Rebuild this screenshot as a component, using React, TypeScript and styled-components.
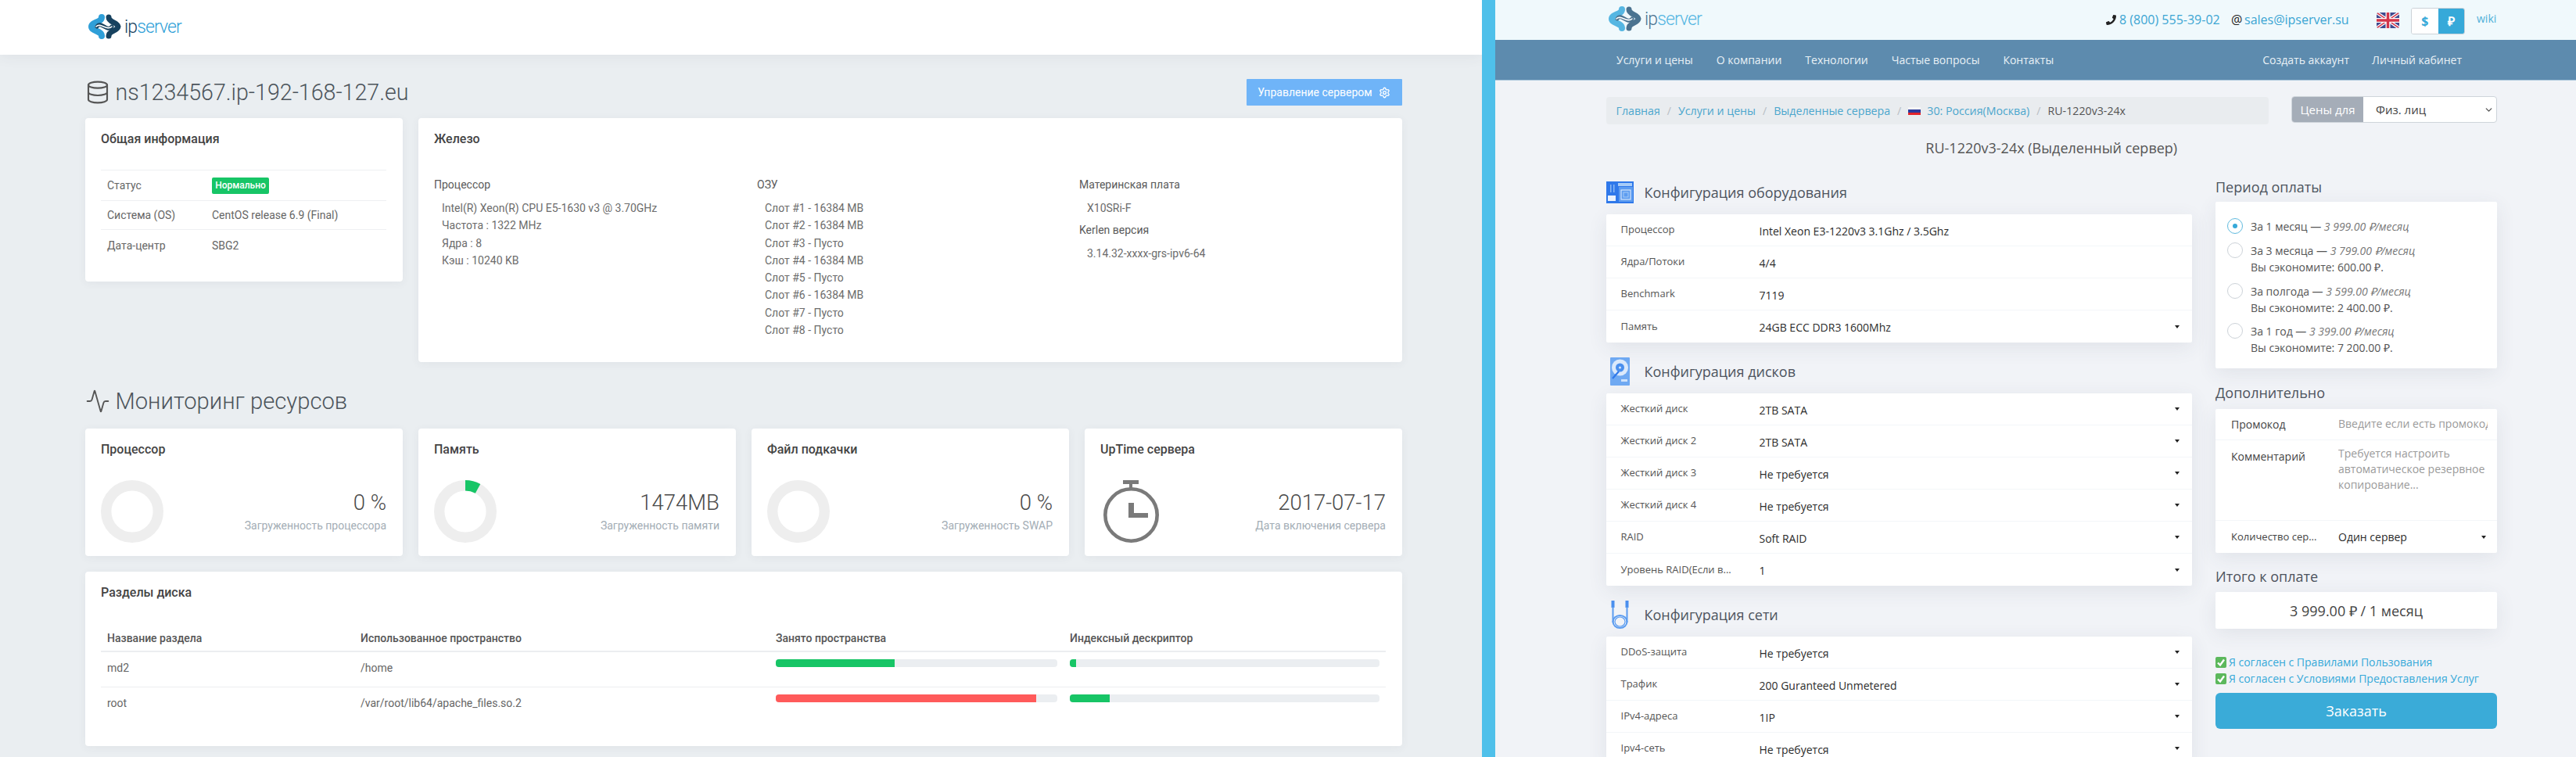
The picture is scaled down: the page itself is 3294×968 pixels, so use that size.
import React from 'react';
import styled, { createGlobalStyle } from 'styled-components';
import { Database, Activity, Settings, ChevronDown } from 'lucide-react';
import { FaPhoneAlt } from 'react-icons/fa';

const Global = createGlobalStyle`
  html, body { margin: 0; padding: 0; height: 968px; overflow: hidden; background: #fff; }
  * { box-sizing: border-box; }
`;

const Page = styled.div`
  display: grid;
  grid-template-columns: 1895px 17px 1382px;
  width: 3294px;
  height: 968px;
  overflow: hidden;
`;

const Divider = styled.div`
  background: #4fc0ea;
`;

/* ---------- left panel ---------- */

const Dash = styled.div`
  background: #eaeef1;
  font-family: Roboto, sans-serif;
  color: #666;
  font-size: 14px;
  height: 968px;
  overflow: hidden;
`;

const DashTop = styled.header`
  height: 70px;
  background: #fff;
  padding: 17px 0 0 112px;
  box-shadow: 0 1px 18px rgba(60, 70, 80, 0.08);
`;

const DashMain = styled.main`
  padding: 31px 102.5px 0 108.5px;
`;

const TitleRow = styled.div`
  display: flex;
  align-items: center;
  justify-content: space-between;
  height: 34px;
  margin-bottom: 16px;
`;

const PageTitle = styled.h1<{ $size?: number }>`
  display: flex;
  align-items: center;
  gap: 7px;
  margin: 0;
  font-size: ${(p) => p.$size ?? 28.6}px;
  font-weight: 300;
  color: #4c545b;
  line-height: 34px;
`;

const ManageButton = styled.div`
  width: 199px;
  height: 34px;
  background: #6fb4f8;
  border-radius: 1px;
  color: #fff;
  display: flex;
  align-items: center;
  justify-content: center;
  gap: 8px;
  font-weight: 400;
`;

const TopGrid = styled.div`
  display: grid;
  grid-template-columns: 406px 1fr;
  gap: 20px;
  align-items: start;
`;

const Card = styled.section<{ $h: number }>`
  background: #fff;
  border-radius: 4px;
  height: ${(p) => p.$h}px;
  padding: 16px 20.5px 0;
  box-shadow: 0 2px 12px rgba(60, 70, 80, 0.06);
`;

const CardTitle = styled.h3`
  margin: 0;
  font-size: 16px;
  font-weight: 500;
  line-height: 22px;
  color: #444;
`;

const InfoTable = styled.div`
  margin-top: 28px;
  border-top: 1px solid #eef0f2;
`;

const InfoRow = styled.div<{ $h: number; $line?: boolean }>`
  display: grid;
  grid-template-columns: 134px 1fr;
  align-items: center;
  height: ${(p) => p.$h}px;
  padding: 0 8px;
  border-bottom: ${(p) => (p.$line ? '1px solid #eef0f2' : '0')};
`;

const Badge = styled.span`
  display: inline-flex;
  align-items: center;
  justify-content: center;
  width: 73px;
  height: 21px;
  background: #17c566;
  border-radius: 2px;
  color: #fff;
  font-size: 12px;
  font-weight: 500;
`;

const HwGrid = styled.div`
  display: grid;
  grid-template-columns: 413px 412px 1fr;
  margin-top: 36px;
`;

const HwHead = styled.div<{ $mt?: number }>`
  line-height: 22px;
  color: #5a5a5a;
  margin-top: ${(p) => p.$mt ?? 0}px;
`;

const HwList = styled.div`
  margin-top: 8px;
  padding-left: 10px;
  line-height: 22.3px;
  color: #6c6c6c;
`;

const SectionTitle = styled(PageTitle)`
  margin-top: 32px;
  height: 36px;
  margin-bottom: 17px;
`;

const StatGrid = styled.div`
  display: grid;
  grid-template-columns: repeat(4, 1fr);
  gap: 20px;
`;

const StatBody = styled.div`
  display: flex;
  justify-content: space-between;
  margin-top: 28px;
`;

const StatText = styled.div`
  text-align: right;
  padding-top: 10px;
`;

const StatValue = styled.div`
  font-size: 27.5px;
  font-weight: 300;
  color: #4a4a4a;
  line-height: 38px;
`;

const StatSub = styled.div`
  color: #a3adb5;
  line-height: 20px;
`;

const DiskCard = styled(Card)`
  margin-top: 20px;
`;

const DiskRow = styled.div<{ $h: number; $line: string }>`
  display: grid;
  grid-template-columns: 324px 531px 376px 1fr;
  height: ${(p) => p.$h}px;
  border-bottom: ${(p) => p.$line};
  > div {
    padding: 0 8px;
  }
`;

const DiskHead = styled(DiskRow)`
  margin-top: 28px;
  padding-top: 3px;
  font-weight: 500;
  color: #555;
  align-items: center;
`;

const DiskCell = styled.div`
  padding-top: 10px !important;
  line-height: 20px;
`;

const Track = styled.div`
  height: 10px;
  margin-top: 9px;
  background: #ebeef1;
  border-radius: 4px;
  overflow: hidden;
`;

const Fill = styled.div<{ $c: string }>`
  height: 100%;
  background: ${(p) => p.$c};
`;

/* ---------- right panel ---------- */

const Shop = styled.div`
  background: #f1f3f7;
  font-family: 'Open Sans', sans-serif;
  font-size: 14px;
  color: #333;
  height: 968px;
  overflow: hidden;
`;

const ShopTop = styled.div`
  height: 51px;
  background: #f0f9fc;
  display: flex;
  align-items: flex-start;
  padding: 7px 101px 0 144px;
`;

const ShopTopRight = styled.div`
  margin-left: auto;
  width: 500px;
  height: 40px;
  display: flex;
  align-items: flex-start;
  padding-top: 7px;
  font-size: 16px;
  line-height: 22px;
  color: #3ba5d3;
`;

const ContactIcon = styled.span`
  color: #222;
  width: 17px;
  flex: none;
  display: inline-flex;
  align-items: center;
  height: 22px;
`;

const Phone = styled.span`
  width: 143px;
  flex: none;
`;

const Mail = styled.span`
  width: 168px;
  flex: none;
  margin-right: 1px;
`;

const Flag = styled.div`
  width: 29px;
  height: 20px;
  margin: 2px 15px 0 0;
  flex: none;
  border-radius: 3px;
  overflow: hidden;
  line-height: 0;
`;

const Currency = styled.div`
  display: flex;
  width: 69px;
  height: 34px;
  margin: -4px 15px 0 0;
  border-radius: 3px;
  border: 1px solid #ccd2d8;
  background: #fff;
  overflow: hidden;
  font-weight: 700;
  flex: none;
`;

const CurCell = styled.div<{ $on?: boolean }>`
  flex: 1;
  display: flex;
  align-items: center;
  justify-content: center;
  background: ${(p) => (p.$on ? '#36a9d9' : '#fff')};
  color: ${(p) => (p.$on ? '#fff' : '#36a9d9')};
`;

const Wiki = styled.span`
  font-size: 14px;
  line-height: 20px;
  color: #4fb0d9;
`;

const Nav = styled.nav`
  height: 52px;
  background: #5d8bae;
  border-bottom: 1px solid #a8c6da;
  display: flex;
  align-items: center;
  padding: 0 146px 0 155px;
  gap: 30px;
  color: #e9f1f6;
  font-weight: 500;
`;

const NavRight = styled.div`
  margin-left: auto;
  display: flex;
  gap: 29px;
`;

const ShopBody = styled.div`
  padding: 20px 101px 0 141.5px;
`;

const CrumbRow = styled.div`
  display: flex;
  align-items: flex-start;
  justify-content: space-between;
`;

const Crumbs = styled.div`
  width: 847px;
  height: 35px;
  margin-top: 1px;
  background: #e9ecef;
  border-radius: 4px;
  padding: 0 13px;
  display: flex;
  align-items: center;
  color: #4ba6cd;
  font-size: 14.2px;
  white-space: nowrap;
`;

const Sep = styled.span`
  color: #b8bec4;
  margin: 0 9px;
`;

const CrumbFlag = styled.span`
  width: 16px;
  height: 10px;
  margin-right: 8px;
  display: inline-block;
  background: linear-gradient(#f4f4f6 33%, #2b3a9c 33% 66%, #e2232b 66%);
`;

const CrumbNow = styled.span`
  color: #555;
`;

const PriceFor = styled.div`
  width: 263px;
  height: 34px;
  display: grid;
  grid-template-columns: 91px 1fr;
  border: 1px solid #ced4da;
  border-radius: 4px;
  overflow: hidden;
  background: #fff;
`;

const PriceLabel = styled.div`
  background: #a5adb8;
  color: #fff;
  display: flex;
  align-items: center;
  justify-content: center;
  font-size: 15px;
`;

const PriceValue = styled.div`
  display: flex;
  align-items: center;
  justify-content: space-between;
  padding: 0 3px 0 16px;
  color: #444;
  font-size: 15px;
`;

const Product = styled.h2`
  margin: 17px 0 0;
  font-size: 18px;
  font-weight: 400;
  line-height: 26px;
  color: #555;
  text-align: center;
  height: 26px;
`;

const Columns = styled.div`
  display: grid;
  grid-template-columns: 749.5px 360px;
  gap: 30px;
  margin-top: 17px;
  align-items: start;
`;

const CfgHead = styled.div<{ $h: number; $mb: number; $mt?: number }>`
  display: grid;
  grid-template-columns: 49px 1fr;
  align-items: center;
  height: ${(p) => p.$h}px;
  margin: ${(p) => p.$mt ?? 0}px 0 ${(p) => p.$mb}px;
  font-size: 18px;
  color: #4d545e;
  line-height: 26px;
`;

const CfgIconBox = styled.div`
  display: flex;
  justify-content: center;
  width: 35px;
  line-height: 0;
`;

const Sheet = styled.div`
  background: #fff;
  border-radius: 2px;
  box-shadow: 0 6px 26px rgba(60, 70, 90, 0.09);
`;

const CfgRow = styled.div<{ $last?: boolean }>`
  height: 41px;
  display: grid;
  grid-template-columns: 177px 1fr 24px;
  align-items: center;
  padding-left: 19px;
  border-bottom: ${(p) => (p.$last ? '0' : '1px solid #f3f6f9')};
`;

const CfgLabel = styled.div`
  font-size: 13px;
  color: #555;
  position: relative;
  top: -1px;
  white-space: nowrap;
`;

const CfgValue = styled.div`
  font-size: 14px;
  color: #2b2b2b;
  position: relative;
  top: 1px;
`;

const Caret = styled.span`
  width: 0;
  height: 0;
  border-left: 3.5px solid transparent;
  border-right: 3.5px solid transparent;
  border-top: 4px solid #222;
  margin-left: 2px;
`;

const SideHead = styled.div<{ $mt: number; $mb: number }>`
  font-size: 18px;
  line-height: 26px;
  color: #4d545e;
  margin: ${(p) => p.$mt}px 0 ${(p) => p.$mb}px;
`;

const PeriodSheet = styled(Sheet)`
  height: 213px;
  padding: 21px 15px 0;
`;

const Period = styled.div<{ $h: number }>`
  display: grid;
  grid-template-columns: 30px 1fr;
  height: ${(p) => p.$h}px;
  line-height: 21px;
  color: #555;
  font-size: 14px;
`;

const Radio = styled.span<{ $on?: boolean }>`
  width: 20px;
  height: 20px;
  border-radius: 50%;
  background: #fff;
  border: 1px solid ${(p) => (p.$on ? '#5fbade' : '#ccd2d8')};
  display: flex;
  align-items: center;
  justify-content: center;
  &::after {
    content: '';
    width: 6px;
    height: 6px;
    border-radius: 50%;
    background: ${(p) => (p.$on ? '#36a9d9' : 'transparent')};
  }
`;

const Price = styled.em`
  color: #777;
`;

const ExtraRow = styled.div<{ $h: number; $line?: boolean }>`
  height: ${(p) => p.$h}px;
  display: grid;
  grid-template-columns: 137px 1fr;
  padding: 0 12px 0 20px;
  border-bottom: ${(p) => (p.$line ? '1px solid #f3f6f9' : '0')};
  font-size: 14px;
  color: #444;
`;

const ExtraText = styled.div<{ $pt: number; $small?: boolean }>`
  padding-top: ${(p) => p.$pt}px;
  line-height: 20px;
  font-size: ${(p) => (p.$small ? 13 : 14)}px;
  white-space: nowrap;
  overflow: hidden;
`;

const Placeholder = styled(ExtraText)`
  color: #9a9a9a;
`;

const Wrapped = styled(Placeholder)`
  white-space: normal;
`;

const CountValue = styled(ExtraText)`
  display: flex;
  justify-content: space-between;
  align-items: center;
  color: #2b2b2b;
  height: 40px;
  padding-right: 2px;
`;

const Total = styled(Sheet)`
  height: 47px;
  display: flex;
  align-items: center;
  justify-content: center;
  font-size: 18px;
  color: #444;
`;

const Agree = styled.div<{ $mt: number }>`
  display: flex;
  align-items: center;
  gap: 3px;
  height: 21px;
  margin-top: ${(p) => p.$mt}px;
  color: #36a9d9;
  font-size: 14px;
`;

const Tick = styled.span`
  width: 14px;
  height: 14px;
  background: #5cb85c;
  border-radius: 2px;
  display: flex;
  line-height: 0;
`;

const Order = styled.div`
  height: 46px;
  margin-top: 8px;
  background: #3aabd8;
  border-radius: 6px;
  color: #fff;
  font-size: 18px;
  font-weight: 500;
  display: flex;
  align-items: center;
  justify-content: center;
`;

/* ---------- drawings ---------- */

const Logo = ({ faded = false }: { faded?: boolean }) => {
  const light = faded ? '#55b6e2' : '#2f9fd8';
  const dark = faded ? '#4a7390' : '#17425f';
  return (
    <svg width="130" height="36" viewBox="0 0 130 36">
      <g fill="none" strokeLinecap="round">
        <path d="M18 5 C18 12 5 11 5 17 C5 23 18 22 18 29" stroke={light} strokeWidth="8" />
        <path d="M27 5 C27 12 38 11 39 17 C38 23 27 22 27 29" stroke={dark} strokeWidth="7" />
        <path d="M12 17 C17 9 25 25 31 17" stroke={dark} strokeWidth="5" />
        <path d="M11 17 C16 11 25 23 31 17" stroke="#fff" strokeWidth="1.5" />
      </g>
      <text x="47" y="25" fontFamily="Roboto, sans-serif" fontWeight="300" fontSize="23" letterSpacing="-0.9" fill={dark}>
        ip<tspan fill={light}>server</tspan>
      </text>
    </svg>
  );
};

const Donut = ({ pct = 0 }: { pct?: number }) => {
  const r = 33.3;
  const c = 2 * Math.PI * r;
  return (
    <svg width="80" height="80" viewBox="0 0 80 80">
      <circle cx="40" cy="40" r={r} fill="none" stroke="#eeeeee" strokeWidth="13.4" />
      {pct > 0 && (
        <circle
          cx="40"
          cy="40"
          r={r}
          fill="none"
          stroke="#17c566"
          strokeWidth="13.4"
          strokeDasharray={`${(c * pct) / 100} ${c}`}
          transform="rotate(-90 40 40)"
        />
      )}
    </svg>
  );
};

const Stopwatch = () => (
  <svg width="80" height="80" viewBox="0 0 80 80" fill="#7a7a7a">
    <rect x="29" y="0" width="20" height="5" />
    <rect x="37" y="4" width="4" height="7" />
    <circle cx="39.5" cy="44.5" r="33.2" fill="none" stroke="#7a7a7a" strokeWidth="4.6" />
    <rect x="36" y="29" width="7" height="19" />
    <rect x="36" y="42" width="25" height="6" />
  </svg>
);

const UkFlag = () => (
  <svg width="29" height="20" viewBox="0 0 29 20">
    <rect width="29" height="20" fill="#3f4a8f" />
    <path d="M0 0 L29 20 M29 0 L0 20" stroke="#fff" strokeWidth="4" />
    <path d="M0 0 L29 20 M29 0 L0 20" stroke="#d3354a" strokeWidth="1.5" />
    <path d="M14.5 0 V20 M0 10 H29" stroke="#fff" strokeWidth="6" />
    <path d="M14.5 0 V20 M0 10 H29" stroke="#d3354a" strokeWidth="3.5" />
  </svg>
);

const BoardIcon = () => (
  <svg width="35" height="28" viewBox="0 0 35 28">
    <rect width="35" height="28" fill="#2f78ea" />
    <rect x="15" y="2" width="18" height="4" fill="#a8ccf7" />
    <rect x="16" y="7" width="18" height="19" fill="#5d9cf0" />
    <rect x="19" y="11" width="12" height="12" fill="none" stroke="#d4e5fb" strokeWidth="1.2" />
    <rect x="22" y="14" width="6" height="6" fill="none" stroke="#a8ccf7" strokeWidth="1" />
    <rect x="2" y="18" width="10" height="7" fill="#eaf2fd" />
    <rect x="5" y="4" width="1.5" height="10" fill="#8ab8f3" />
    <rect x="9" y="4" width="1.5" height="10" fill="#8ab8f3" />
  </svg>
);

const HddIcon = () => (
  <svg width="25" height="36" viewBox="0 0 25 36">
    <rect width="25" height="36" rx="1" fill="#6fa9f2" />
    <circle cx="12.5" cy="13" r="10.5" fill="#dbe9fb" />
    <circle cx="12.5" cy="13" r="5.5" fill="#4a8fee" />
    <circle cx="12.5" cy="13" r="1.6" fill="#cfe2fa" />
    <path d="M3 27 L11 18" stroke="#2f78ea" strokeWidth="2.2" />
    <rect x="14" y="28" width="8" height="3" fill="#cfe2fa" />
  </svg>
);

const CableIcon = () => (
  <svg width="23" height="36" viewBox="0 0 23 36" fill="none" stroke="#5b9cf0" strokeWidth="2">
    <rect x="0.5" y="0" width="4" height="9" fill="#4a8fee" stroke="none" />
    <rect x="18.5" y="0" width="4" height="9" fill="#4a8fee" stroke="none" />
    <path d="M2.5 8 V28 M20.5 8 V28" />
    <ellipse cx="11.5" cy="27" rx="9" ry="8" />
    <ellipse cx="11.5" cy="27" rx="6.5" ry="6" strokeWidth="1.2" />
  </svg>
);

const Check = () => (
  <svg width="14" height="14" viewBox="0 0 14 14" fill="none" stroke="#fff" strokeWidth="2.4">
    <path d="M3 7.5 L6 10.5 L11 3.5" />
  </svg>
);

const slots = [
  'Слот #1 - 16384 MB',
  'Слот #2 - 16384 MB',
  'Слот #3 - Пусто',
  'Слот #4 - 16384 MB',
  'Слот #5 - Пусто',
  'Слот #6 - 16384 MB',
  'Слот #7 - Пусто',
  'Слот #8 - Пусто',
];

const disks = ['Жесткий диск', 'Жесткий диск 2', 'Жесткий диск 3', 'Жесткий диск 4', 'RAID', 'Уровень RAID(Если в...'];
const diskValues = ['2TB SATA', '2TB SATA', 'Не требуется', 'Не требуется', 'Soft RAID', '1'];
const nets = [
  ['DDoS-защита', 'Не требуется'],
  ['Трафик', '200 Guranteed Unmetered'],
  ['IPv4-адреса', '1IP'],
  ['Ipv4-сеть', 'Не требуется'],
];

export default function App() {
  return (
    <Page>
      <Global />
      <Dash>
        <DashTop>
          <Logo />
        </DashTop>
        <DashMain>
          <TitleRow>
            <PageTitle>
              <Database size={32} strokeWidth={1.6} color="#555" />
              ns1234567.ip-192-168-127.eu
            </PageTitle>
            <ManageButton>
              Управление сервером <Settings size={15} strokeWidth={2.2} />
            </ManageButton>
          </TitleRow>
          <TopGrid>
            <Card $h={209}>
              <CardTitle>Общая информация</CardTitle>
              <InfoTable>
                <InfoRow $h={39} $line>
                  <span>Статус</span>
                  <span>
                    <Badge>Нормально</Badge>
                  </span>
                </InfoRow>
                <InfoRow $h={37} $line>
                  <span>Система (OS)</span>
                  <span>CentOS release 6.9 (Final)</span>
                </InfoRow>
                <InfoRow $h={39}>
                  <span>Дата-центр</span>
                  <span>SBG2</span>
                </InfoRow>
              </InfoTable>
            </Card>
            <Card $h={312}>
              <CardTitle>Железо</CardTitle>
              <HwGrid>
                <div>
                  <HwHead>Процессор</HwHead>
                  <HwList>
                    <div>Intel(R) Xeon(R) CPU E5-1630 v3 @ 3.70GHz</div>
                    <div>Частота : 1322 MHz</div>
                    <div>Ядра : 8</div>
                    <div>Кэш : 10240 KB</div>
                  </HwList>
                </div>
                <div>
                  <HwHead>ОЗУ</HwHead>
                  <HwList>
                    {slots.map((s) => (
                      <div key={s}>{s}</div>
                    ))}
                  </HwList>
                </div>
                <div>
                  <HwHead>Материнская плата</HwHead>
                  <HwList>
                    <div>X10SRi-F</div>
                  </HwList>
                  <HwHead $mt={6}>Kerlen версия</HwHead>
                  <HwList>
                    <div>3.14.32-xxxx-grs-ipv6-64</div>
                  </HwList>
                </div>
              </HwGrid>
            </Card>
          </TopGrid>
          <SectionTitle $size={29.2}>
            <Activity size={32} strokeWidth={1.4} color="#555" />
            Мониторинг ресурсов
          </SectionTitle>
          <StatGrid>
            <Card $h={163}>
              <CardTitle>Процессор</CardTitle>
              <StatBody>
                <Donut />
                <StatText>
                  <StatValue>0 %</StatValue>
                  <StatSub>Загруженность процессора</StatSub>
                </StatText>
              </StatBody>
            </Card>
            <Card $h={163}>
              <CardTitle>Память</CardTitle>
              <StatBody>
                <Donut pct={8} />
                <StatText>
                  <StatValue>1474MB</StatValue>
                  <StatSub>Загруженность памяти</StatSub>
                </StatText>
              </StatBody>
            </Card>
            <Card $h={163}>
              <CardTitle>Файл подкачки</CardTitle>
              <StatBody>
                <Donut />
                <StatText>
                  <StatValue>0 %</StatValue>
                  <StatSub>Загруженность SWAP</StatSub>
                </StatText>
              </StatBody>
            </Card>
            <Card $h={163}>
              <CardTitle>UpTime сервера</CardTitle>
              <StatBody>
                <Stopwatch />
                <StatText>
                  <StatValue>2017-07-17</StatValue>
                  <StatSub>Дата включения сервера</StatSub>
                </StatText>
              </StatBody>
            </Card>
          </StatGrid>
          <DiskCard $h={223}>
            <CardTitle>Разделы диска</CardTitle>
            <DiskHead $h={37} $line="2px solid #eceef0">
              <div>Название раздела</div>
              <div>Использованное пространство</div>
              <div>Занято пространства</div>
              <div>Индексный дескриптор</div>
            </DiskHead>
            <DiskRow $h={45} $line="1px solid #eceef0">
              <DiskCell>md2</DiskCell>
              <DiskCell>/home</DiskCell>
              <div>
                <Track>
                  <Fill $c="#17c566" style={{ width: '42.3%' }} />
                </Track>
              </div>
              <div>
                <Track>
                  <Fill $c="#17c566" style={{ width: '2%' }} />
                </Track>
              </div>
            </DiskRow>
            <DiskRow $h={45} $line="0">
              <DiskCell>root</DiskCell>
              <DiskCell>/var/root/lib64/apache_files.so.2</DiskCell>
              <div>
                <Track>
                  <Fill $c="#ff5a5a" style={{ width: '92.4%' }} />
                </Track>
              </div>
              <div>
                <Track>
                  <Fill $c="#17c566" style={{ width: '13%' }} />
                </Track>
              </div>
            </DiskRow>
          </DiskCard>
        </DashMain>
      </Dash>
      <Divider />
      <Shop>
        <ShopTop>
          <Logo faded />
          <ShopTopRight>
            <ContactIcon>
              <FaPhoneAlt size={13} style={{ transform: 'scaleX(-1)' }} />
            </ContactIcon>
            <Phone>8 (800) 555-39-02</Phone>
            <ContactIcon>@</ContactIcon>
            <Mail>sales@ipserver.su</Mail>
            <Flag>
              <UkFlag />
            </Flag>
            <Currency>
              <CurCell>$</CurCell>
              <CurCell $on>₽</CurCell>
            </Currency>
            <Wiki>wiki</Wiki>
          </ShopTopRight>
        </ShopTop>
        <Nav>
          <span>Услуги и цены</span>
          <span>О компании</span>
          <span>Технологии</span>
          <span>Частые вопросы</span>
          <span>Контакты</span>
          <NavRight>
            <span>Создать аккаунт</span>
            <span>Личный кабинет</span>
          </NavRight>
        </Nav>
        <ShopBody>
          <CrumbRow>
            <Crumbs>
              <span>Главная</span>
              <Sep>/</Sep>
              <span>Услуги и цены</span>
              <Sep>/</Sep>
              <span>Выделенные сервера</span>
              <Sep>/</Sep>
              <CrumbFlag />
              <span>30: Россия(Москва)</span>
              <Sep>/</Sep>
              <CrumbNow>RU-1220v3-24x</CrumbNow>
            </Crumbs>
            <PriceFor>
              <PriceLabel>Цены для</PriceLabel>
              <PriceValue>
                Физ. лиц <ChevronDown size={13} strokeWidth={2.5} color="#555" />
              </PriceValue>
            </PriceFor>
          </CrumbRow>
          <Product>RU-1220v3-24x (Выделенный сервер)</Product>
          <Columns>
            <div>
              <CfgHead $h={28} $mb={14} $mt={13}>
                <CfgIconBox>
                  <BoardIcon />
                </CfgIconBox>
                Конфигурация оборудования
              </CfgHead>
              <Sheet>
                <CfgRow>
                  <CfgLabel>Процессор</CfgLabel>
                  <CfgValue>Intel Xeon E3-1220v3 3.1Ghz / 3.5Ghz</CfgValue>
                </CfgRow>
                <CfgRow>
                  <CfgLabel>Ядра/Потоки</CfgLabel>
                  <CfgValue>4/4</CfgValue>
                </CfgRow>
                <CfgRow>
                  <CfgLabel>Benchmark</CfgLabel>
                  <CfgValue>7119</CfgValue>
                </CfgRow>
                <CfgRow $last>
                  <CfgLabel>Память</CfgLabel>
                  <CfgValue>24GB ECC DDR3 1600Mhz</CfgValue>
                  <Caret />
                </CfgRow>
              </Sheet>
              <CfgHead $h={36} $mb={10} $mt={19}>
                <CfgIconBox>
                  <HddIcon />
                </CfgIconBox>
                Конфигурация дисков
              </CfgHead>
              <Sheet>
                {disks.map((d, i) => (
                  <CfgRow key={d} $last={i === disks.length - 1}>
                    <CfgLabel>{d}</CfgLabel>
                    <CfgValue>{diskValues[i]}</CfgValue>
                    <Caret />
                  </CfgRow>
                ))}
              </Sheet>
              <CfgHead $h={36} $mb={10} $mt={19}>
                <CfgIconBox>
                  <CableIcon />
                </CfgIconBox>
                Конфигурация сети
              </CfgHead>
              <Sheet>
                {nets.map(([l, v]) => (
                  <CfgRow key={l}>
                    <CfgLabel>{l}</CfgLabel>
                    <CfgValue>{v}</CfgValue>
                    <Caret />
                  </CfgRow>
                ))}
              </Sheet>
            </div>
            <div>
              <SideHead $mt={7} $mb={6}>Период оплаты</SideHead>
              <PeriodSheet>
                <Period $h={31}>
                  <Radio $on />
                  <div>
                    За 1 месяц — <Price>3 999.00 ₽/месяц</Price>
                  </div>
                </Period>
                <Period $h={52}>
                  <Radio />
                  <div>
                    За 3 месяца — <Price>3 799.00 ₽/месяц</Price>
                    <br />
                    Вы сэкономите: 600.00 ₽.
                  </div>
                </Period>
                <Period $h={51}>
                  <Radio />
                  <div>
                    За полгода — <Price>3 599.00 ₽/месяц</Price>
                    <br />
                    Вы сэкономите: 2 400.00 ₽.
                  </div>
                </Period>
                <Period $h={51}>
                  <Radio />
                  <div>
                    За 1 год — <Price>3 399.00 ₽/месяц</Price>
                    <br />
                    Вы сэкономите: 7 200.00 ₽.
                  </div>
                </Period>
              </PeriodSheet>
              <SideHead $mt={18} $mb={8}>Дополнительно</SideHead>
              <Sheet>
                <ExtraRow $h={40} $line>
                  <ExtraText $pt={10}>Промокод</ExtraText>
                  <Placeholder $pt={9}>Введите если есть промокод</Placeholder>
                </ExtraRow>
                <ExtraRow $h={103} $line>
                  <ExtraText $pt={11}>Комментарий</ExtraText>
                  <Wrapped $pt={7}>Требуется настроить автоматическое резервное копирование...</Wrapped>
                </ExtraRow>
                <ExtraRow $h={41}>
                  <ExtraText $pt={10} $small>Количество сер...</ExtraText>
                  <CountValue $pt={2}>
                    Один сервер <Caret />
                  </CountValue>
                </ExtraRow>
              </Sheet>
              <SideHead $mt={17} $mb={7}>Итого к оплате</SideHead>
              <Total>3 999.00 ₽ / 1 месяц</Total>
              <Agree $mt={32}>
                <Tick>
                  <Check />
                </Tick>
                Я согласен с Правилами Пользования
              </Agree>
              <Agree $mt={0}>
                <Tick>
                  <Check />
                </Tick>
                Я согласен с Условиями Предоставления Услуг
              </Agree>
              <Order>Заказать</Order>
            </div>
          </Columns>
        </ShopBody>
      </Shop>
    </Page>
  );
}
